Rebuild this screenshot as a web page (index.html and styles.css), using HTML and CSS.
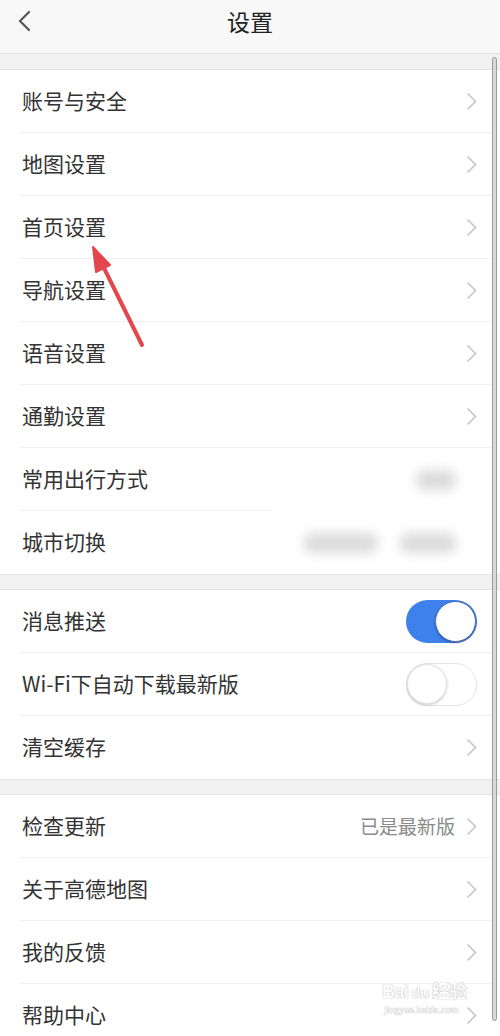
FILE: index.html
```html
<!DOCTYPE html>
<html lang="zh">
<head>
<meta charset="utf-8">
<link rel="stylesheet" href="styles.css">
</head>
<body>
<div class="screen">
  <header class="topbar">
    <svg class="back" width="14" height="22" viewBox="0 0 14 22"><path d="M12 2 L3 11 L12 20" fill="none" stroke="#555" stroke-width="2.2" stroke-linecap="round" stroke-linejoin="round"/></svg>
    <h1 class="title">设置</h1>
  </header>

  <section class="group">
    <div class="row"><span class="label">账号与安全</span><svg class="chev" width="11" height="19" viewBox="0 0 11 19"><path d="M1.5 1.5 L9.5 9.5 L1.5 17.5" fill="none" stroke="#c6c6c6" stroke-width="1.6"/></svg></div>
    <div class="row"><span class="label">地图设置</span><svg class="chev" width="11" height="19" viewBox="0 0 11 19"><path d="M1.5 1.5 L9.5 9.5 L1.5 17.5" fill="none" stroke="#c6c6c6" stroke-width="1.6"/></svg></div>
    <div class="row"><span class="label">首页设置</span><svg class="chev" width="11" height="19" viewBox="0 0 11 19"><path d="M1.5 1.5 L9.5 9.5 L1.5 17.5" fill="none" stroke="#c6c6c6" stroke-width="1.6"/></svg></div>
    <div class="row"><span class="label">导航设置</span><svg class="chev" width="11" height="19" viewBox="0 0 11 19"><path d="M1.5 1.5 L9.5 9.5 L1.5 17.5" fill="none" stroke="#c6c6c6" stroke-width="1.6"/></svg></div>
    <div class="row"><span class="label">语音设置</span><svg class="chev" width="11" height="19" viewBox="0 0 11 19"><path d="M1.5 1.5 L9.5 9.5 L1.5 17.5" fill="none" stroke="#c6c6c6" stroke-width="1.6"/></svg></div>
    <div class="row"><span class="label">通勤设置</span><svg class="chev" width="11" height="19" viewBox="0 0 11 19"><path d="M1.5 1.5 L9.5 9.5 L1.5 17.5" fill="none" stroke="#c6c6c6" stroke-width="1.6"/></svg></div>
    <div class="row row-short"><span class="label">常用出行方式</span><span class="blurs"><span class="blob b1"></span></span></div>
    <div class="row row-last"><span class="label">城市切换</span><span class="blurs"><span class="blob b2"></span><span class="blob b3"></span></span></div>
  </section>

  <section class="group">
    <div class="row"><span class="label">消息推送</span><span class="toggle on"><span class="knob"></span></span></div>
    <div class="row"><span class="label">Wi-Fi下自动下载最新版</span><span class="toggle off"><span class="knob"></span></span></div>
    <div class="row row-last"><span class="label">清空缓存</span><svg class="chev" width="11" height="19" viewBox="0 0 11 19"><path d="M1.5 1.5 L9.5 9.5 L1.5 17.5" fill="none" stroke="#c6c6c6" stroke-width="1.6"/></svg></div>
  </section>

  <section class="group">
    <div class="row"><span class="label">检查更新</span><span class="right"><span class="value">已是最新版</span><svg class="chev" width="11" height="19" viewBox="0 0 11 19"><path d="M1.5 1.5 L9.5 9.5 L1.5 17.5" fill="none" stroke="#c6c6c6" stroke-width="1.6"/></svg></span></div>
    <div class="row"><span class="label">关于高德地图</span><svg class="chev" width="11" height="19" viewBox="0 0 11 19"><path d="M1.5 1.5 L9.5 9.5 L1.5 17.5" fill="none" stroke="#c6c6c6" stroke-width="1.6"/></svg></div>
    <div class="row"><span class="label">我的反馈</span><svg class="chev" width="11" height="19" viewBox="0 0 11 19"><path d="M1.5 1.5 L9.5 9.5 L1.5 17.5" fill="none" stroke="#c6c6c6" stroke-width="1.6"/></svg></div>
    <div class="row"><span class="label">帮助中心</span><svg class="chev" width="11" height="19" viewBox="0 0 11 19"><path d="M1.5 1.5 L9.5 9.5 L1.5 17.5" fill="none" stroke="#c6c6c6" stroke-width="1.6"/></svg></div>
  </section>

  <div class="scrollbar"></div>

  <svg class="arrow" width="80" height="110" viewBox="0 0 80 110">
    <path d="M62 103 L22 22" stroke="#e2474d" stroke-width="4" stroke-linecap="round"/>
    <path d="M13 5 L30 23 L16 30 Z" fill="#e2474d" stroke="#e2474d" stroke-width="2" stroke-linejoin="round"/>
  </svg>

  <div class="watermark">
    <div class="wm-main">Bai<span class="wm-du">du</span>经验</div>
    <div class="wm-sub">jingyan.baidu.com</div>
  </div>
</div>
</body>
</html>
```

FILE: styles.css
```css
* { box-sizing: border-box; }
html, body { margin: 0; padding: 0; }
body {
  background: #f1f1f1;
  font-family: "Noto Sans CJK SC", "Noto Sans", sans-serif;
  color: #333;
}
.screen {
  position: relative;
  width: 500px;
  height: 1036px;
  overflow: hidden;
  background: #f1f1f1;
}
.topbar {
  height: 54px;
  background: #f8f8f8;
  border-bottom: 1px solid #e2e2e2;
  display: flex;
  align-items: center;
  justify-content: center;
  position: relative;
}
.back {
  position: absolute;
  left: 17px;
  top: 10px;
}
.title {
  margin: 0;
  font-size: 23px;
  font-weight: normal;
  color: #222;
  line-height: 1;
  margin-top: -10px;
}
.group {
  background: #fff;
  margin-top: 15px;
  border-top: 1px solid #e4e4e4;
  border-bottom: 1px solid #e6e6e6;
}
.group + .group { margin-top: 14px; }
.row {
  height: 63px;
  display: flex;
  align-items: center;
  justify-content: space-between;
  padding: 0 22px 0 22px;
  position: relative;
}
.row::after {
  content: "";
  position: absolute;
  left: 20px;
  right: 8px;
  bottom: 0;
  height: 1px;
  background: #efefef;
}
.row-short::after { right: 228px; }
.row-last::after { display: none; }
.label {
  font-size: 21px;
  line-height: 1;
  color: #333;
  margin-top: -2px;
}
.chev { margin-right: 1px; }
.right { display: flex; align-items: center; gap: 11px; }
.value {
  font-size: 19px;
  color: #8a8a8a;
  margin-top: -2px;
}
.blurs { display: flex; align-items: center; gap: 22px; }
.blob {
  display: block;
  height: 20px;
  background: #d2d2d2;
  border-radius: 8px;
  filter: blur(6px);
  opacity: 0.8;
}
.b1 { width: 40px; margin-right: 22px; }
.b2 { width: 74px; }
.b3 { width: 56px; margin-right: 22px; }
.toggle {
  width: 71px;
  height: 43px;
  border-radius: 22px;
  position: relative;
  margin-right: 1px;
}
.toggle.on { background: #3e80ec; }
.toggle.off { background: #fff; border: 1.5px solid #e4e4e4; }
.knob {
  position: absolute;
  top: 1px;
  width: 41px;
  height: 41px;
  border-radius: 50%;
  background: #fff;
}
.toggle.on .knob { right: 1px; box-shadow: 0 1px 2px rgba(0,0,0,0.35); border: 1px solid #4a6cb0; }
.toggle.off .knob { left: 0; top: 0; width: 40px; height: 40px; box-shadow: 0 1px 3px rgba(0,0,0,0.2); border: 1px solid #e2e2e2; }
.scrollbar {
  position: absolute;
  left: 492px;
  top: 57px;
  width: 5px;
  height: 964px;
  border-radius: 3px;
  background: #d8d8d8;
  border: 1px solid #9a9a9a;
}
.arrow {
  position: absolute;
  left: 80px;
  top: 242px;
}
.watermark {
  position: absolute;
  left: 382px;
  top: 982px;
  color: #fff;
  text-shadow: 0 0 1px #999, 0 0 1px #aaa;
  opacity: 0.9;
}
.wm-main {
  font-family: "Liberation Sans", "Noto Sans CJK SC", sans-serif;
  font-size: 18px;
  font-weight: bold;
  line-height: 1.2;
  letter-spacing: -0.5px;
}
.wm-du { font-size: 15px; margin: 0 3px; }
.wm-sub {
  font-family: "Liberation Serif", serif;
  font-size: 10px;
  line-height: 1.2;
  padding-left: 2px;
}
```
